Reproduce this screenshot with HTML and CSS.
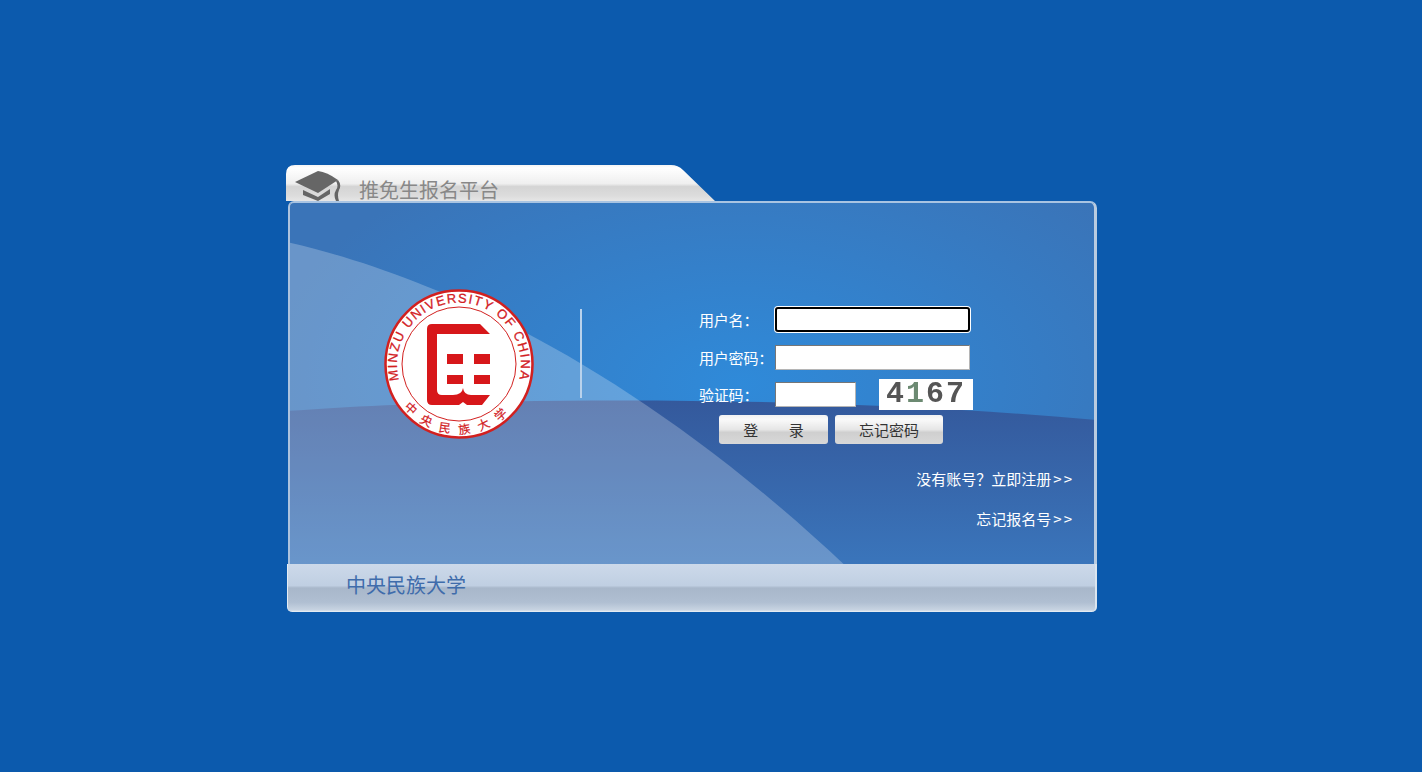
FILE: index.html
```html
<!DOCTYPE html>
<html lang="zh-CN">
<head>
    <meta charset="UTF-8">
    <title>推免生报名平台</title>
    <link rel="stylesheet" href="styles.css">
</head>
<body>
<div id="login">
    <div class="tab">
        <svg class="cap" viewBox="0 0 46 31" width="46" height="31">
            <path d="M0 12 L23 1 Q32 2 43 10 L23 23 Z" fill="#666"/>
            <path d="M8 20 L23 27 L35 19 V24 L23 31 L8 25 Z" fill="#666"/>
            <path d="M41 11 Q44 16 41 20 Q38 25 41 31 H44 Q42 25 44 20 Q47 15 43 10 Z" fill="#666"/>
        </svg>
        <span class="tab-title">推免生报名平台</span>
    </div>
    <div class="panel">
        <svg class="curves" viewBox="0 0 809 363" preserveAspectRatio="none">
            <defs>
                <linearGradient id="dark" x1="0" y1="0" x2="0" y2="1">
                    <stop offset="0" stop-color="#34599c" stop-opacity="1"/>
                    <stop offset="1" stop-color="#3a75bb" stop-opacity="1"/>
                </linearGradient>
            </defs>
            <path d="M0 209 C150 197 500 190 809 218 L809 363 L0 363 Z" fill="url(#dark)"/>
            <path d="M0 40 C130 70 330 150 557 363 L0 363 Z" fill="#fff" fill-opacity="0.24"/>
        </svg>
        <div class="logo">
            <svg viewBox="-75 -75 150 150" width="150" height="150">
                <defs>
                    <path id="arc-en" d="M-57 25 A62 62 0 1 1 57 25"/>
                    <path id="arc-cn" d="M-55 43 A70 70 0 0 0 55 43"/>
                </defs>
                <circle r="73.5" fill="#fff" stroke="#d2201f" stroke-width="2.5"/>
                <circle r="57" fill="none" stroke="#d2201f" stroke-width="1"/>
                <text class="seal-en"><textPath href="#arc-en" startOffset="50%" text-anchor="middle">MINZU UNIVERSITY OF CHINA</textPath></text>
                <text class="seal-cn"><textPath href="#arc-cn" startOffset="50%" text-anchor="middle">中央民族大学</textPath></text>
                <path fill="#d7171a" d="M-27 -40H21L31 -30H-22V26Q-22 31 -17 31H-6Q3 31 4 24Q5 31 12 31H31L23 41H8L4 38L0 41H-27Q-32 41 -32 36V-35Q-32 -40 -27 -40Z"/>
                <rect x="-12" y="-10" width="16" height="10" fill="#d7171a"/>
                <rect x="15" y="-10" width="16" height="10" fill="#d7171a"/>
                <rect x="-12" y="11" width="16" height="9" fill="#d7171a"/>
                <rect x="15" y="11" width="16" height="9" fill="#d7171a"/>
            </svg>
        </div>
        <div class="divider"></div>
        <div class="form">
            <div class="row row-user">
                <label>用户名：</label>
                <input class="txt focused" type="text">
            </div>
            <div class="row row-pass">
                <label>用户密码：</label>
                <input class="txt" type="password">
            </div>
            <div class="row row-code">
                <label>验证码：</label>
                <input class="txt short" type="text">
                <div class="captcha"><span>4</span><span class="green">1</span><span>6</span><span>7</span></div>
            </div>
            <div class="buttons">
                <button class="button btn-login">登 录</button>
                <button class="button btn-forgot">忘记密码</button>
            </div>
            <div class="links">
                <a>没有账号？立即注册<span class="arrows">&gt;&gt;</span></a>
                <a>忘记报名号<span class="arrows">&gt;&gt;</span></a>
            </div>
        </div>
    </div>
    <div class="foot">中央民族大学</div>
</div>
</body>
</html>
```

FILE: styles.css
```css
html, body{
    margin: 0;
    height: 100%;
}
body{
    background-color: #0c5aad;
    font-family: "Noto Sans CJK SC", "Liberation Sans", sans-serif;
    overflow: hidden;
}
#login{
    width: 811px;
    margin-left: 286px;
    padding-top: 165px;
}
.tab{
    display: flex;
    align-items: flex-end;
    width: 429px;
    height: 36px;
    box-sizing: border-box;
    padding-left: 9px;
    background: linear-gradient(to bottom, #f4f4f4 0, #fff 8%, #efefef 52%, #d4d4d4 60%, #dcdcdc 85%, #e6e6e6 100%);
    clip-path: path("M0 36 V9 Q0 0 9 0 H385 Q392 0 397 5 L429 36 Z");
}
.cap{
    display: block;
    flex: none;
}
.tab-title{
    margin-left: 18px;
    margin-bottom: -4px;
    font-size: 20px;
    line-height: 30px;
    color: #888;
}
.panel{
    position: relative;
    display: flex;
    align-items: flex-start;
    height: 363px;
    margin-left: 2px;
    box-sizing: border-box;
    background: radial-gradient(ellipse 480px 260px at 56% 50%, #2f8ad9 0, #3a74b8 100%);
    border-top: 2px solid #a9c4e2;
    border-left: 2px solid #adc3de;
    border-right: 3px solid #b9cbe0;
    border-top-left-radius: 6px;
    border-top-right-radius: 7px;
    overflow: hidden;
}
.curves{
    position: absolute;
    left: 0;
    top: 0;
    width: 100%;
    height: 100%;
}
.logo{
    position: relative;
    flex: none;
    margin-left: 94px;
    margin-top: 86px;
    width: 150px;
    height: 150px;
}
.logo svg{
    display: block;
}
.seal-en{
    font-family: "Liberation Sans", sans-serif;
    font-size: 13px;
    letter-spacing: 1.5px;
    fill: #d2201f;
    stroke: #d2201f;
    stroke-width: 0.3px;
}
.seal-cn{
    font-family: "Noto Sans CJK SC", sans-serif;
    font-size: 12px;
    letter-spacing: 9px;
    fill: #d2201f;
    stroke: #d2201f;
    stroke-width: 0.2px;
}
.divider{
    position: relative;
    flex: none;
    width: 2px;
    height: 89px;
    margin-left: 46px;
    margin-top: 106px;
    background-color: #b9d2ec;
}
.form{
    position: relative;
    flex: none;
    width: 375px;
    margin-left: 117px;
    margin-top: 104px;
    color: #fff;
    font-size: 15px;
}
.row{
    display: flex;
    align-items: center;
    height: 25px;
}
.row-pass{
    margin-top: 13px;
}
.row-code{
    height: 31px;
    margin-top: 9px;
}
.row label{
    flex: none;
    width: 76px;
    letter-spacing: -0.2px;
    white-space: nowrap;
}
.txt{
    width: 195px;
    height: 25px;
    box-sizing: border-box;
    padding: 0;
    background-color: #fff;
    border: 1px solid;
    border-color: #767676 #b5b5b5 #b5b5b5 #767676;
    outline: none;
}
.txt.focused{
    border: 2px solid #000;
    border-radius: 3px;
    box-shadow: 0 0 0 1px #fff;
}
.txt.short{
    width: 81px;
}
.captcha{
    width: 94px;
    height: 31px;
    margin-left: 23px;
    background-color: #fff;
    font-family: "Liberation Mono", monospace;
    font-weight: bold;
    font-size: 30px;
    line-height: 31px;
    letter-spacing: 2px;
    padding-left: 7px;
    box-sizing: border-box;
    color: #555;
    white-space: nowrap;
}
.captcha span{
    filter: blur(0.5px);
}
.captcha .green{
    color: #6c8a72;
}
.buttons{
    display: flex;
    gap: 7px;
    margin-top: 5px;
    margin-left: 20px;
}
.button{
    height: 29px;
    width: 109px;
    padding: 0;
    border: none;
    border-radius: 3px;
    background: linear-gradient(to bottom, #f2f2f2 0, #fafafa 15%, #e6e6e6 50%, #cfcfcf 60%, #d8d8d8 100%);
    color: #333;
    font-family: inherit;
    font-size: 15px;
    line-height: 29px;
}
.btn-login{
    word-spacing: 27px;
}
.btn-forgot{
    width: 108px;
}
.links{
    display: flex;
    flex-direction: column;
    align-items: flex-end;
    gap: 20px;
    margin-top: 25px;
    line-height: 20px;
}
.arrows{
    margin-left: 2px;
    letter-spacing: 2px;
}
.foot{
    height: 48px;
    box-sizing: border-box;
    margin-left: 1px;
    width: 810px;
    padding-left: 58px;
    background: linear-gradient(to bottom, #ccd9ea 0, #c0cfe2 45%, #a8b7ca 50%, #b0bfd2 80%, #c8d4e2 96%, #eef3f8 100%);
    border-right: 2px solid #dbe5ef;
    border-left: 1px solid #e4ecf4;
    border-bottom-left-radius: 5px;
    border-bottom-right-radius: 5px;
    font-size: 20px;
    line-height: 42px;
    color: #3f6cab;
}
```
